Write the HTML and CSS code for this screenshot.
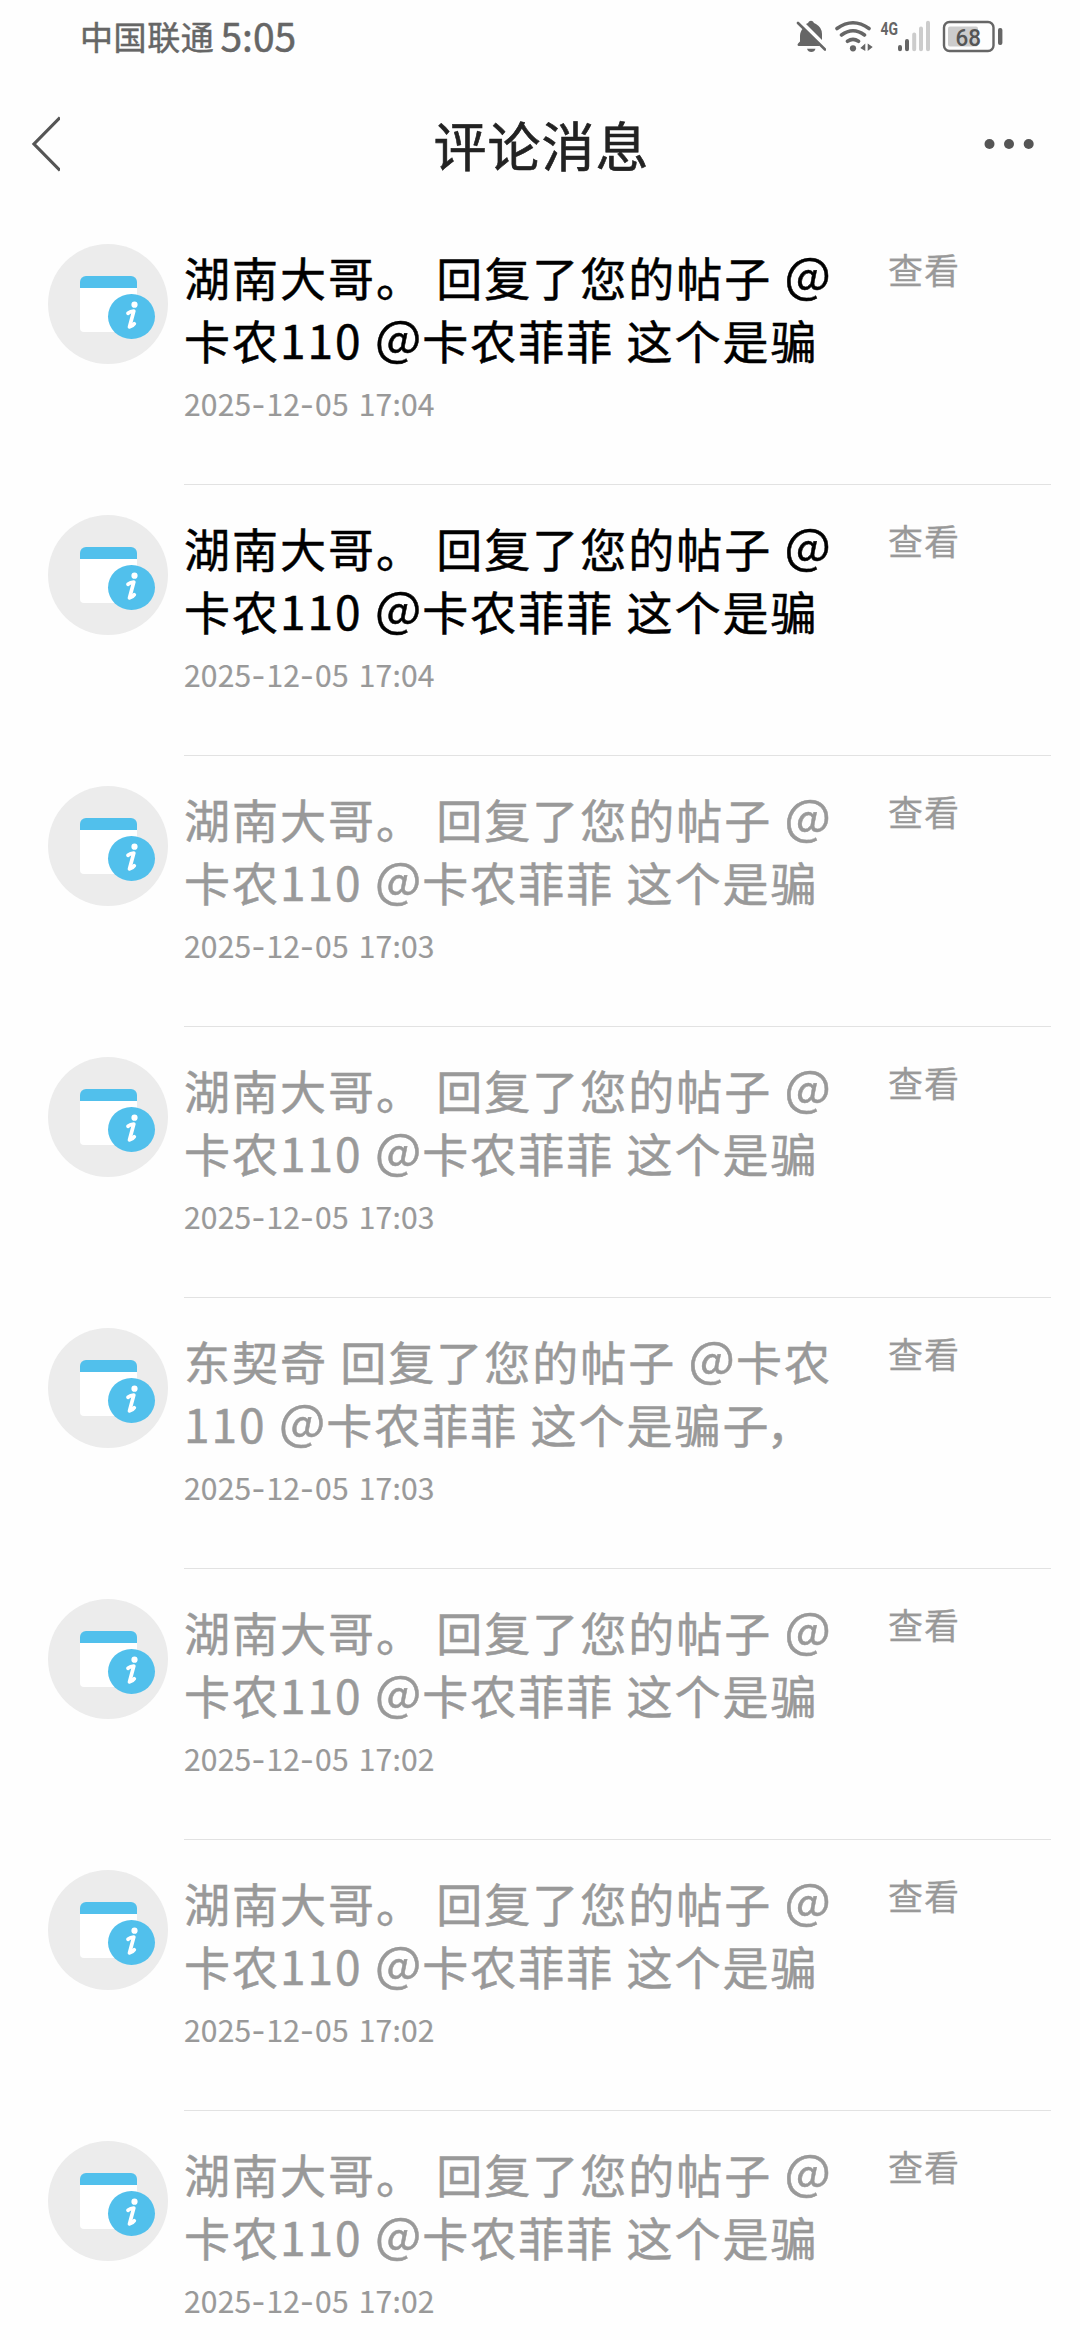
FILE: index.html
```html
<!DOCTYPE html>
<html lang="zh-CN">
<head>
<meta charset="utf-8">
<title>评论消息</title>
<link rel="stylesheet" href="styles.css">
</head>
<body>
<svg width="0" height="0" class="defs">
  <symbol id="notice" viewBox="0 0 120 120">
    <circle cx="60" cy="60" r="60" fill="#ececec"/>
    <path d="M32 43h57v41a4 4 0 0 1-4 4H36a4 4 0 0 1-4-4z" fill="#fff"/>
    <path d="M32 44v-6a6 6 0 0 1 6-6h45a6 6 0 0 1 6 6v6z" fill="#51c0ec"/>
    <ellipse cx="83.500" cy="72.500" rx="23.500" ry="22.500" fill="#51c0ec"/>
    <circle cx="86.500" cy="60.700" r="3.100" fill="#fff"/>
    <path d="M80 69.300q2.500-2 5.800-2.300l-4.300 16q3-.5 4.800-3.200" fill="none" stroke="#fff" stroke-width="3.700" stroke-linecap="round" stroke-linejoin="round"/>
  </symbol>
</svg>
<div class="screen">
  <header class="status">
    <span class="carrier">中国联通</span><span class="clock">5:05</span>
    <div class="indicators">
      <svg class="bell" width="30" height="34" viewBox="795 20 30 34">
        <path d="M802 28.500l17 17.500H797.500q-2-1 0-3l1.500-1.500V36q0-4.500 3-7.500z" fill="#666"/>
        <path d="M805 24q2.500-.7 3-2.500 2-1.500 4 0 .5 1.500 3 2.500 6 3.500 6 10v6z" fill="#666"/>
        <path d="M806 48.700h8.500q-1 3.300-4.200 3.300t-4.300-3.300z" fill="#666"/>
        <path d="M797 23l27 26.500" stroke="#666" stroke-width="2.600" stroke-linecap="round"/>
      </svg>
      <svg class="wifi" width="40" height="34" viewBox="833 20 40 34" fill="none" stroke="#666" stroke-width="3.600" stroke-linecap="round">
        <path d="M836 28.500q16-11.500 32 0M840.500 35q11.500-8.500 23 0M846.500 41.300q5.500-3.800 11 0"/>
        <circle cx="852" cy="48.300" r="3.100" fill="#666" stroke="none"/>
        <path d="M864.300 43.500v7.500l-5-3zM866.700 43.500v7.500l5-4z" fill="#666" stroke="none"/>
      </svg>
      <svg class="signal" width="51" height="34" viewBox="879 20 51 34">
        <text x="879.500" y="34.700" class="network" textLength="17.500" lengthAdjust="spacingAndGlyphs">4G</text>
        <g stroke-width="4" stroke-linecap="round">
          <path d="M899 47v2.200M906 41v8.200" stroke="#666"/>
          <path d="M913.200 34.500v14.700M920 28.500v20.700M927 22.800v26.400" stroke="#ccc"/>
        </g>
      </svg>
      <svg class="battery" width="61" height="34" viewBox="941 20 61 34">
        <rect x="943" y="22" width="49.500" height="29" rx="5.500" fill="none" stroke="#666" stroke-width="2.400"/>
        <rect x="947" y="26.500" width="30" height="20" rx="2" fill="#ccc"/>
        <rect x="997" y="28" width="4.400" height="17" rx="2" fill="#666"/>
        <text x="954.500" y="45.800" class="level" textLength="25.500" lengthAdjust="spacingAndGlyphs">68</text>
      </svg>
    </div>
  </header>
  <nav class="bar">
    <svg width="30" height="58" viewBox="0 0 30 58"><path d="M30 2.500L4 29l26 26.500" fill="none" stroke="#555" stroke-width="3.200"/></svg>
    <h1>评论消息</h1>
    <svg width="50" height="12" viewBox="0 0 50 12" fill="#555"><circle cx="5.500" cy="6" r="5"/><circle cx="25" cy="6" r="5"/><circle cx="44.700" cy="6" r="5"/></svg>
  </nav>
  <main>
    <article class="item unread">
      <svg class="avatar"><use href="#notice"/></svg>
      <div class="body"><p>湖南大哥。 回复了您的帖子 <span class="at">@</span><br>卡农110 <span class="at">@</span>卡农菲菲 这个是骗</p><time>2025<i>-</i>12<i>-</i>05 17:04</time></div>
      <a>查看</a>
    </article>
    <article class="item unread">
      <svg class="avatar"><use href="#notice"/></svg>
      <div class="body"><p>湖南大哥。 回复了您的帖子 <span class="at">@</span><br>卡农110 <span class="at">@</span>卡农菲菲 这个是骗</p><time>2025<i>-</i>12<i>-</i>05 17:04</time></div>
      <a>查看</a>
    </article>
    <article class="item">
      <svg class="avatar"><use href="#notice"/></svg>
      <div class="body"><p>湖南大哥。 回复了您的帖子 <span class="at">@</span><br>卡农110 <span class="at">@</span>卡农菲菲 这个是骗</p><time>2025<i>-</i>12<i>-</i>05 17:03</time></div>
      <a>查看</a>
    </article>
    <article class="item">
      <svg class="avatar"><use href="#notice"/></svg>
      <div class="body"><p>湖南大哥。 回复了您的帖子 <span class="at">@</span><br>卡农110 <span class="at">@</span>卡农菲菲 这个是骗</p><time>2025<i>-</i>12<i>-</i>05 17:03</time></div>
      <a>查看</a>
    </article>
    <article class="item">
      <svg class="avatar"><use href="#notice"/></svg>
      <div class="body"><p>东契奇 回复了您的帖子 <span class="at">@</span>卡农<br>110 <span class="at">@</span>卡农菲菲 这个是骗<span class="tight">子</span>，</p><time>2025<i>-</i>12<i>-</i>05 17:03</time></div>
      <a>查看</a>
    </article>
    <article class="item">
      <svg class="avatar"><use href="#notice"/></svg>
      <div class="body"><p>湖南大哥。 回复了您的帖子 <span class="at">@</span><br>卡农110 <span class="at">@</span>卡农菲菲 这个是骗</p><time>2025<i>-</i>12<i>-</i>05 17:02</time></div>
      <a>查看</a>
    </article>
    <article class="item">
      <svg class="avatar"><use href="#notice"/></svg>
      <div class="body"><p>湖南大哥。 回复了您的帖子 <span class="at">@</span><br>卡农110 <span class="at">@</span>卡农菲菲 这个是骗</p><time>2025<i>-</i>12<i>-</i>05 17:02</time></div>
      <a>查看</a>
    </article>
    <article class="item">
      <svg class="avatar"><use href="#notice"/></svg>
      <div class="body"><p>湖南大哥。 回复了您的帖子 <span class="at">@</span><br>卡农110 <span class="at">@</span>卡农菲菲 这个是骗</p><time>2025<i>-</i>12<i>-</i>05 17:02</time></div>
      <a>查看</a>
    </article>
  </main>
</div>
</body>
</html>
```
FILE: styles.css
```css
* { box-sizing: border-box; }
body { margin: 0; background: #fefefe; font-family: "Noto Sans CJK SC", sans-serif; }
.defs { display: block; }
.screen { width: 1080px; height: 2340px; overflow: hidden; display: flex; flex-direction: column; }

.status { flex: none; height: 76px; padding: 0 77px 0 80px; display: flex; align-items: center; color: #666; -webkit-text-stroke: .5px; }
.carrier { font-size: 33px; letter-spacing: .6px; line-height: 72px; height: 76px; }
.clock { font-size: 39px; line-height: 71px; height: 76px; margin-left: 6px; }
.indicators { margin-left: auto; display: flex; margin-top: -2px; -webkit-text-stroke: 0; }
.wifi { margin-left: 8px; }
.signal { margin-left: 6px; }
.battery { margin-left: 11px; }
.network { font: 700 18.5px Roboto, sans-serif; fill: #666; }
.level { font: 500 24px Roboto, sans-serif; fill: #555; }

.bar { flex: none; height: 138px; padding: 0 46px 0 30px; display: grid; grid-template-columns: 50px 1fr 50px; align-items: center; }
.bar svg { position: relative; top: -1px; }
.bar h1 { margin: -3px 0 0 19px; text-align: center; font-size: 53px; line-height: 80px; letter-spacing: 1px; font-weight: 400; color: #222; -webkit-text-stroke: .6px; }

.item { height: 271px; padding: 30px 0 0 48px; display: grid; grid-template-columns: 136px 704px 1fr; align-items: start; color: #999; position: relative; }
.item::after { content: ""; position: absolute; left: 184px; right: 29px; bottom: 0; height: 1px; background: #e2e2e2; }
.avatar { width: 120px; height: 120px; }
.body p { margin: 0; padding-top: 1px; height: 122px; overflow: hidden; white-space: nowrap; font-size: 46px; line-height: 63px; letter-spacing: 2px; text-indent: 0; -webkit-text-stroke: .5px; }
.unread p { color: #000; }
.at { font-size: 49px; line-height: 1px; letter-spacing: 1px; vertical-align: 3px; }
.tight { letter-spacing: -2px; }
time { display: block; margin-top: 15px; font-size: 30px; line-height: 44px; letter-spacing: .2px; word-spacing: 3px; -webkit-text-stroke: .2px; }
time i { font-family: Inter, sans-serif; font-style: normal; letter-spacing: 1.2px; }
.item a { font-size: 35px; line-height: 50px; letter-spacing: 1px; -webkit-text-stroke: .3px; }
```
